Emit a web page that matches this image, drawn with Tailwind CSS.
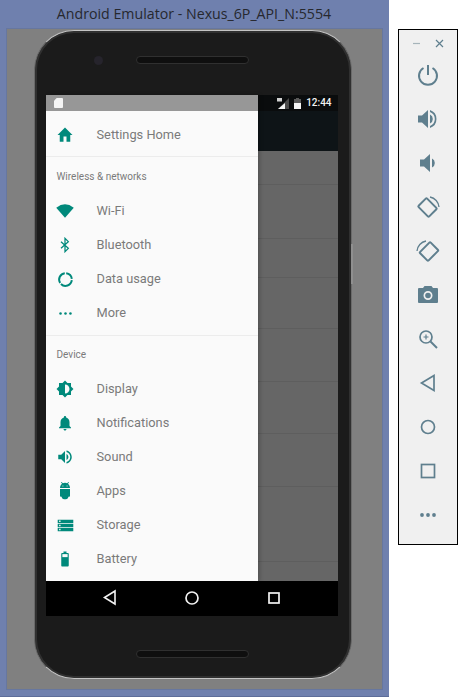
<!DOCTYPE html>
<html lang="en">
<head>
    <meta charset="UTF-8">
    <title>Android Emulator</title>
    <script src="https://cdn.jsdelivr.net/npm/@tailwindcss/browser@4"></script>
</head>
<body class="bg-white w-[462px] h-[698px] overflow-hidden font-['Roboto',sans-serif]">
<div class="flex items-start">
    <!-- Emulator window -->
    <div class="w-[389px] h-[697px] bg-[#6f80ae] shrink-0 flex flex-col border-b border-[#5d6d99]">
        <div class="h-[28px] flex items-center justify-center text-[14.2px] text-[#26282e] font-['Open_Sans',sans-serif] pr-[1px]">Android Emulator - Nexus_6P_API_N:5554</div>
        <div class="mx-[6px] h-[662px] bg-[#808080] border border-[#67779f] relative">
            <!-- Phone body -->
            <div class="absolute left-[27px] top-[1px] w-[318px] h-[649px] rounded-[40px] bg-[#1b1b1b] border border-y-[#c4c4c4] border-x-[#6a6a6a] shadow-[inset_0_0_0_2px_#303030] flex flex-col items-center">
                <!-- Side buttons -->
                <div class="absolute right-[-2px] top-[213px] w-[2px] h-[40px] bg-[#8f8f8f]"></div>
                <!-- Earpiece and camera -->
                <div class="h-[64px] w-full relative shrink-0">
                    <div class="absolute left-[59px] top-[25px] w-[9px] h-[9px] rounded-full bg-[#26242c]"></div>
                    <div class="absolute left-[101px] top-[25px] w-[113px] h-[8px] rounded-full bg-[#0f0f0f] border border-[#303030]"></div>
                </div>
                <!-- Screen -->
                <div class="w-[292px] h-[521px] ml-[-3px] shrink-0 bg-black relative flex flex-col">
                    <!-- Background app, dimmed -->
                    <div class="h-[16px] bg-[#0a0c0d] shrink-0"></div>
                    <div class="h-[40px] bg-[#0e1417] shrink-0"></div>
                    <div class="h-[430px] bg-[#666666] shrink-0 flex flex-col items-stretch">
                        <div class="h-[34px] border-b border-[#5e5e5e]"></div>
                        <div class="h-[54px] border-b border-[#5e5e5e]"></div>
                        <div class="h-[39px] border-b border-[#5e5e5e]"></div>
                        <div class="h-[51px] border-b border-[#5e5e5e]"></div>
                        <div class="h-[53px] border-b border-[#5e5e5e]"></div>
                        <div class="h-[52px] border-b border-[#5e5e5e]"></div>
                        <div class="h-[53px] border-b border-[#5e5e5e]"></div>
                        <div class="h-[75px] border-b border-[#5e5e5e]"></div>
                    </div>
                    <div class="h-[35px] bg-black shrink-0 relative">
                        <svg class="absolute left-[56px] top-[8px]" width="15" height="17" viewBox="0 0 15 17" fill="none" stroke="#f2f2f2" stroke-width="1.6"><path d="M13 2 L2.5 8.5 L13 15 Z"/></svg>
                        <svg class="absolute left-[138px] top-[9px]" width="16" height="16" viewBox="0 0 16 16" fill="none" stroke="#f2f2f2" stroke-width="1.7"><circle cx="8" cy="8" r="6"/></svg>
                        <svg class="absolute left-[221px] top-[10px]" width="14" height="14" viewBox="0 0 14 14" fill="none" stroke="#f2f2f2" stroke-width="1.7"><rect x="2" y="2" width="10" height="10"/></svg>
                    </div>

                    <!-- Status bar -->
                    <div class="absolute left-0 top-0 w-full h-[16px] flex items-center justify-end pr-[6px] gap-[5px]">
                        <svg width="12" height="11" viewBox="0 0 12 11"><path d="M12 0 V11 H1 Z" fill="#4a4a4a"/><path d="M8 5 V11 H1 Z" fill="#f5f5f5"/><rect x="0" y="0" width="5" height="3.5" fill="#d0d0d0"/></svg>
                        <svg width="7" height="11" viewBox="0 0 7 11"><path d="M2 0 H5 V1 H7 V11 H0 V1 H2 Z" fill="#5a5a5a"/><path d="M0 5 H7 V11 H0 Z" fill="#f5f5f5"/></svg>
                        <span class="text-[10px] font-medium text-[#f2f2f2] leading-none">12:44</span>
                    </div>

                    <!-- Drawer -->
                    <div class="absolute left-0 top-0 w-[212px] h-[486px] flex flex-col shadow-[2px_0_4px_rgba(0,0,0,0.2)]">
                        <div class="h-[16px] bg-[#979797] shrink-0 pl-[8px] pt-[3px]">
                            <svg class="block" width="9" height="10" viewBox="0 0 10 11" fill="#f5f5f5"><path d="M3 0 H9 Q10 0 10 1 V10 Q10 11 9 11 H1 Q0 11 0 10 V3 Z"/></svg>
                        </div>
                        <div class="flex-1 bg-[#fafafa] flex flex-col text-[12.8px] text-[#7a7a7a]">
                            <div class="h-[46px] flex items-center border-b border-[#ececec] pt-[2px]">
                                <div class="w-[39px] mr-[12px] flex justify-center shrink-0">
                                    <svg class="w-[18px] h-[18px] shrink-0" viewBox="0 0 24 24" fill="#00897b"><path d="M10 21v-7h4v7h5v-9h3L12 2 2 12h3v9z"/></svg>
                                </div>
                                <span>Settings Home</span>
                            </div>
                            <div class="h-[37px] flex items-center pl-[11px] text-[10px] pt-[1px]">Wireless &amp; networks</div>
                            <div class="flex flex-col">
                                <div class="h-[34px] flex items-center">
                                    <div class="w-[39px] mr-[12px] flex justify-center shrink-0"><svg class="w-[20px] h-[20px] shrink-0" viewBox="0 0 24 24" fill="#00897b"><path d="M12 20 L1.5 8 Q12 0 22.5 8 Z"/></svg></div>
                                    <span>Wi-Fi</span>
                                </div>
                                <div class="h-[34px] flex items-center">
                                    <div class="w-[39px] mr-[12px] flex justify-center shrink-0"><svg class="w-[16px] h-[16px] shrink-0" viewBox="0 0 24 24" fill="none" stroke="#00897b" stroke-width="1.9"><path d="M6 7 L17 17 L12 22 V2 L17 7 L6 17"/></svg></div>
                                    <span>Bluetooth</span>
                                </div>
                                <div class="h-[34px] flex items-center">
                                    <div class="w-[39px] mr-[12px] flex justify-center shrink-0"><svg class="w-[17px] h-[17px] shrink-0" viewBox="0 0 24 24" fill="none" stroke="#00897b" stroke-width="2.8"><path d="M13 3.100 A9 9 0 0 1 20.900 11"/><path d="M20.900 13 A9 9 0 0 1 5.600 18.400"/><path d="M4.400 16.800 A9 9 0 0 1 11 3.100"/></svg></div>
                                    <span>Data usage</span>
                                </div>
                                <div class="h-[34px] flex items-center">
                                    <div class="w-[39px] mr-[12px] flex justify-center shrink-0"><svg class="w-[17px] h-[17px] shrink-0" viewBox="0 0 24 24" fill="#00897b"><circle cx="5" cy="12" r="1.800"/><circle cx="12" cy="12" r="1.800"/><circle cx="19" cy="12" r="1.800"/></svg></div>
                                    <span>More</span>
                                </div>
                            </div>
                            <div class="h-[37px] mt-[5px] flex items-center pl-[11px] text-[10px] border-t border-[#ececec]">Device</div>
                            <div class="flex flex-col">
                                <div class="h-[34px] flex items-center">
                                    <div class="w-[39px] mr-[12px] flex justify-center shrink-0"><svg class="w-[18px] h-[18px] shrink-0" viewBox="0 0 24 24" fill="#00897b"><path d="M20 15.300 23.300 12 20 8.700V4h-4.700L12 .7 8.700 4H4v4.700L.7 12 4 15.300V20h4.700l3.300 3.300 3.300-3.300H20v-4.700zM12 18V6c3.300 0 6 2.700 6 6s-2.700 6-6 6z"/></svg></div>
                                    <span>Display</span>
                                </div>
                                <div class="h-[34px] flex items-center">
                                    <div class="w-[39px] mr-[12px] flex justify-center shrink-0"><svg class="w-[18px] h-[18px] shrink-0" viewBox="0 0 24 24" fill="#00897b"><path d="M12 22c1.100 0 2-.9 2-2h-4c0 1.100.9 2 2 2zm6-6v-5c0-3.100-1.600-5.600-4.500-6.300V4c0-.8-.7-1.500-1.500-1.500s-1.500.7-1.500 1.500v.7C7.600 5.400 6 7.900 6 11v5l-2 2v1h16v-1l-2-2z"/></svg></div>
                                    <span>Notifications</span>
                                </div>
                                <div class="h-[34px] flex items-center">
                                    <div class="w-[39px] mr-[12px] flex justify-center shrink-0"><svg class="w-[18px] h-[18px] shrink-0" viewBox="0 0 24 24" fill="#00897b"><path d="M3 9v6h4l5 5V4L7 9H3zm13.500 3c0-1.800-1-3.300-2.500-4v8c1.500-.7 2.500-2.200 2.500-4zM14 3.200v2.100c2.900.9 5 3.500 5 6.700s-2.100 5.800-5 6.700v2.100c4-.9 7-4.500 7-8.800s-3-7.900-7-8.800z"/></svg></div>
                                    <span>Sound</span>
                                </div>
                                <div class="h-[34px] flex items-center">
                                    <div class="w-[39px] mr-[12px] flex justify-center shrink-0"><svg class="w-[20px] h-[20px] shrink-0" viewBox="0 0 24 24" fill="#00897b"><path d="M6 18c0 .6.4 1 1 1h1v0c0 1.700 1.300 3 3 3h2c1.700 0 3-1.300 3-3h1c.6 0 1-.4 1-1V9.500H6V18zM15.500 3.200l1.300-1.300-.7-.7-1.500 1.500C13.900 2.200 13 2 12 2s-1.900.2-2.600.7L7.900 1.200l-.7.7 1.300 1.300C7.100 4.300 6 6 6 8.500h12c0-2.500-1.100-4.200-2.500-5.300zM10 6.500H9v-1h1v1zm5 0h-1v-1h1v1z"/></svg></div>
                                    <span>Apps</span>
                                </div>
                                <div class="h-[34px] flex items-center">
                                    <div class="w-[39px] mr-[12px] flex justify-center shrink-0"><svg class="w-[17px] h-[17px] shrink-0" viewBox="0 0 24 24" fill="#00897b"><path d="M1 20h22v-4.500H1V20zm2-3.300h2v2H3v-2zM1 4v4.500h22V4H1zm4 3H3V5h2v2zM1 14.300h22V9.700H1v4.600zm2-3.300h2v2H3v-2z"/></svg></div>
                                    <span>Storage</span>
                                </div>
                                <div class="h-[34px] flex items-center">
                                    <div class="w-[39px] mr-[12px] flex justify-center shrink-0"><svg class="w-[18px] h-[18px] shrink-0" viewBox="0 0 24 24"><path d="M15.700 4H14V2h-4v2H8.300C7.600 4 7 4.600 7 5.300v15.300C7 21.400 7.600 22 8.300 22h7.300c.8 0 1.400-.6 1.400-1.300V5.300C17 4.600 16.400 4 15.700 4z" fill="#00897b"/><rect x="8.500" y="5.500" width="7" height="4" fill="#fafafa"/></svg></div>
                                    <span>Battery</span>
                                </div>
                            </div>
                        </div>
                    </div>
                </div>
                <div class="flex-1 w-full flex items-center justify-center pt-[14px] ml-[-1px]">
                    <div class="w-[113px] h-[8px] rounded-full bg-[#0f0f0f] border border-[#303030]"></div>
                </div>
            </div>
        </div>
    </div>

    <!-- Side toolbar -->
    <div class="ml-[9px] mt-[29px] w-[60px] h-[516px] bg-[#f0f0f0] border border-black flex flex-col items-center shrink-0">
        <div class="h-[24px] w-full flex items-center justify-center gap-[14px] pt-[2px] text-[#7b929c]">
            <svg width="9" height="9" viewBox="0 0 9 9" stroke="#a6b4ba" stroke-width="1.2"><path d="M1 4.500 H8"/></svg>
            <svg width="9" height="9" viewBox="0 0 9 9" stroke="#5f7f8e" stroke-width="1.2"><path d="M1 1 L8 8 M8 1 L1 8"/></svg>
        </div>
        <div class="flex flex-col items-center gap-[22px] text-[#5f7f8e] pt-[10px]">
            <svg class="w-[22px] h-[22px]" viewBox="0 0 22 22" fill="none" stroke="#5f7f8e" stroke-width="2"><path d="M11 1 V11"/><path d="M6.500 4 A9 9 0 1 0 15.500 4"/></svg>
            <svg class="w-[22px] h-[22px]" viewBox="0 0 22 22" fill="#5f7f8e"><path d="M1 7.500 V14.500 H5 L11 20 V2 L5 7.500 Z"/><path d="M13 6.500 A5 5 0 0 1 13 15.500 Z"/><path d="M13 2 V4 A7.500 7.500 0 0 1 13 18 V20 A9.500 9.500 0 0 0 13 2 Z"/></svg>
            <svg class="w-[22px] h-[22px]" viewBox="0 0 22 22" fill="#5f7f8e"><path d="M3 7.500 V14.500 H7 L13 20 V2 L7 7.500 Z"/><path d="M15 6.500 A5 5 0 0 1 15 15.500 Z"/></svg>
            <svg class="w-[24px] h-[24px] -my-[1px]" viewBox="0 0 24 24" fill="none" stroke="#5f7f8e" stroke-width="2"><rect x="5.500" y="5" width="12" height="15" rx="1" transform="rotate(-45 11.500 12.500)"/><path d="M14 2 A11 11 0 0 1 23 12" stroke-width="1.300"/></svg>
            <svg class="w-[24px] h-[24px] -my-[1px]" viewBox="0 0 24 24" fill="none" stroke="#5f7f8e" stroke-width="2"><rect x="7" y="5" width="12" height="15" rx="1" transform="rotate(45 13 12.500)"/><path d="M10 2 A11 11 0 0 0 1 12" stroke-width="1.300"/></svg>
            <svg class="w-[22px] h-[22px]" viewBox="0 0 22 22" fill="#5f7f8e"><path fill-rule="evenodd" d="M7.500 2 L6 4 H2 Q1 4 1 5 V18 Q1 19 2 19 H20 Q21 19 21 18 V5 Q21 4 20 4 H16 L14.500 2 Z M11 7 A4.500 4.500 0 1 1 11 16 A4.500 4.500 0 1 1 11 7 Z"/><circle cx="11" cy="11.500" r="2.800"/></svg>
            <svg class="w-[22px] h-[22px]" viewBox="0 0 22 22" fill="none" stroke="#5f7f8e" stroke-width="1.700"><circle cx="9" cy="9" r="6"/><path d="M13.500 13.500 L20 20" stroke-width="2"/><path d="M9 6.500 V11.500 M6.500 9 H11.500" stroke-width="1.200"/></svg>
            <svg class="w-[22px] h-[22px]" viewBox="0 0 22 22" fill="none" stroke="#5f7f8e" stroke-width="1.700"><path d="M17 3.500 L4.500 11 L17 18.500 Z"/></svg>
            <svg class="w-[22px] h-[22px]" viewBox="0 0 22 22" fill="none" stroke="#5f7f8e" stroke-width="1.700"><circle cx="11" cy="11" r="6.500"/></svg>
            <svg class="w-[22px] h-[22px]" viewBox="0 0 22 22" fill="none" stroke="#5f7f8e" stroke-width="1.700"><rect x="4.500" y="4.500" width="13" height="13"/></svg>
            <svg class="w-[22px] h-[22px]" viewBox="0 0 22 22" fill="#5f7f8e"><circle cx="5" cy="11" r="1.900"/><circle cx="11" cy="11" r="1.900"/><circle cx="17" cy="11" r="1.900"/></svg>
        </div>
    </div>
</div>
</body>
</html>
